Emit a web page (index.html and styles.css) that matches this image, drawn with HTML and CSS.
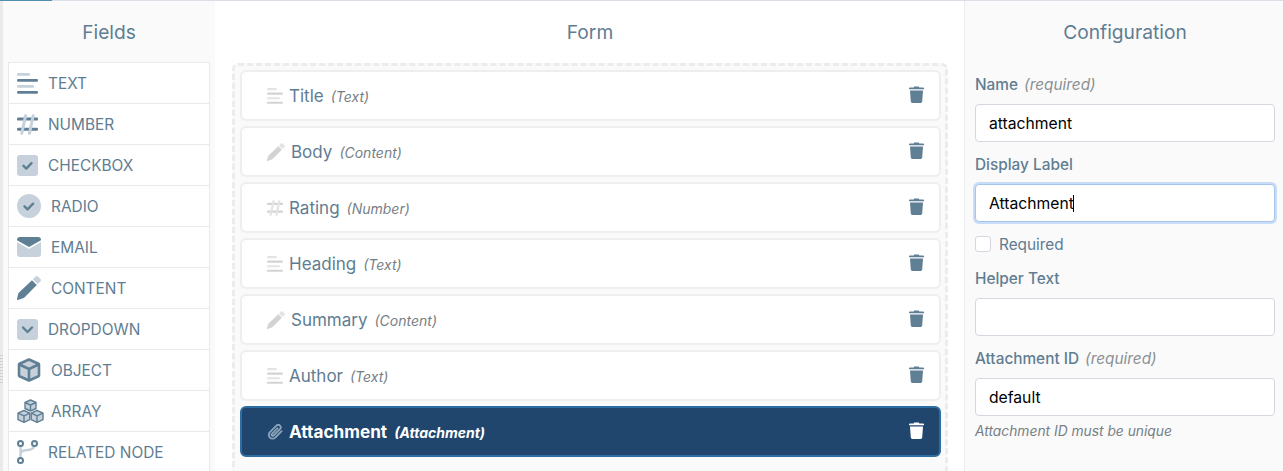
FILE: index.html
```html
<!DOCTYPE html>
<html lang="en">
<head>
<meta charset="utf-8">
<title>Form builder</title>
<link rel="stylesheet" href="styles.css">
</head>
<body>
<svg class="defs" width="0" height="0" aria-hidden="true">
  <defs>
    <symbol id="i-text" viewBox="0 0 21 21">
      <rect class="lt" x="0" y="0" width="13" height="2.8" rx="1.2"/>
      <rect class="dk" x="0" y="6" width="21" height="2.8" rx="1.2"/>
      <rect class="lt" x="0" y="12" width="17" height="2.8" rx="1.2"/>
      <rect class="dk" x="0" y="18" width="21" height="2.8" rx="1.2"/>
    </symbol>
    <symbol id="i-number" viewBox="0 0 21 21">
      <rect class="dk" x="0" y="3.600" width="21" height="3" rx="1.2"/>
      <rect class="dk" x="0" y="13.800" width="21" height="3" rx="1.2"/>
      <rect class="lt" x="5.200" y="0" width="3" height="21" rx="1.4" transform="rotate(12 6.700 10.500)"/>
      <rect class="lt" x="12.800" y="0" width="3" height="21" rx="1.4" transform="rotate(12 14.300 10.500)"/>
    </symbol>
    <symbol id="i-pencil" viewBox="0 0 24 24">
      <path class="lt" d="M18.600 0.600a1.700 1.700 0 0 1 2.300 0l2.500 2.500a1.700 1.700 0 0 1 0 2.300l-2.700 2.700-4.800-4.800z"/>
      <path class="dk" d="M15 4.200l4.800 4.800-12.400 12.400c-.5.500-1 .7-1.600.9L1 24a.8.8 0 0 1-1-1l1.100-4.800c.2-.6.400-1.100.9-1.600z"/>
    </symbol>
    <symbol id="i-trash" viewBox="0 0 15 17">
      <path class="tt" d="M5.200 0.600h4.600l.5 1H14a1 1 0 0 1 1 1v.7H0v-.7a1 1 0 0 1 1-1h3.700z"/>
      <path class="tb" d="M1 4.600h13l-.8 11a1.500 1.500 0 0 1-1.500 1.400H3.300a1.500 1.500 0 0 1-1.500-1.400z"/>
    </symbol>
  </defs>
</svg>
<div class="topline"><div class="topline-active"></div></div>
<div class="app">
  <div class="gutter"><div class="grip"></div></div>
  <aside class="fields">
    <h2 class="title">Fields</h2>
    <ul class="field-list">
      <li class="field-item"><svg class="ic ic-21"><use href="#i-text"/></svg><span>TEXT</span></li>
      <li class="field-item"><svg class="ic ic-21"><use href="#i-number"/></svg><span>NUMBER</span></li>
      <li class="field-item"><svg class="ic ic-21" viewBox="0 0 21 21"><rect class="lt" width="21" height="21" rx="3"/><path class="chk" d="M6.500 10.800l2.800 2.800 5.200-5.400"/></svg><span>CHECKBOX</span></li>
      <li class="field-item"><svg class="ic ic-24" viewBox="0 0 24 24"><circle class="lt" cx="12" cy="12" r="12"/><path class="chk" d="M7.500 12.300l3 3 5.600-5.600"/></svg><span>RADIO</span></li>
      <li class="field-item"><svg class="ic ic-24" viewBox="0 0 24 20"><path class="lt" d="M0 5l12 7 12-7v12a3 3 0 0 1-3 3H3a3 3 0 0 1-3-3z"/><path class="dk" d="M3 0h18a3 3 0 0 1 3 3v.2L12 10 0 3.200V3a3 3 0 0 1 3-3z"/></svg><span>EMAIL</span></li>
      <li class="field-item"><svg class="ic ic-24"><use href="#i-pencil"/></svg><span>CONTENT</span></li>
      <li class="field-item"><svg class="ic ic-21" viewBox="0 0 21 21"><rect class="lt" width="21" height="21" rx="3"/><path class="chk" d="M6 8.500l4.500 4.500 4.500-4.500"/></svg><span>DROPDOWN</span></li>
      <li class="field-item"><svg class="ic ic-24" viewBox="0 0 24 24"><path class="lt" d="M12 1L2 5.500v13L12 23l10-4.500v-13z"/><path class="box" d="M12 1.500l9.500 4.200a1 1 0 0 1 .5.800v11a1 1 0 0 1-.5.800L12 22.500l-9.500-4.200a1 1 0 0 1-.5-.8v-11a1 1 0 0 1 .5-.8z"/><path class="box" d="M2.500 6.500L12 11l9.500-4.500M12 11v11"/></svg><span>OBJECT</span></li>
      <li class="field-item"><svg class="ic ic-27" viewBox="0 0 27 24"><path class="lt box-thin" d="M13.500 1l5.500 2.500v6L13.500 12 8 9.500v-6z"/><path class="box-thin" d="M8 3.500l5.500 2.500L19 3.500M13.500 6v6"/><path class="lt box-thin" d="M7 11.500l5.800 2.700v6.500L7 23.300 1 20.700v-6.500z"/><path class="box-thin" d="M1 14.200l6 2.700 5.800-2.700M7 16.900v6.400"/><path class="lt box-thin" d="M20 11.500l6 2.700v6.500l-6 2.600-5.800-2.600v-6.500z"/><path class="box-thin" d="M14.200 14.200l5.800 2.700 6-2.700M20 16.900v6.400"/></svg><span>ARRAY</span></li>
      <li class="field-item"><svg class="ic ic-21b" viewBox="0 0 21 24"><path class="branch" d="M3.500 6v12M3.500 14.500c0-3.500 2-4 7-4.500 4-.4 6.500-1 6.500-4"/><circle class="node" cx="3.500" cy="3.500" r="2.500"/><circle class="node" cx="17.500" cy="3.500" r="2.500"/><circle class="node" cx="3.500" cy="20.500" r="2.500"/></svg><span>RELATED NODE</span></li>
    </ul>
  </aside>
  <main class="form">
    <h2 class="title">Form</h2>
    <div class="dropzone">
      <div class="card"><svg class="cic cic-text"><use href="#i-text"/></svg><span class="cname">Title</span><em class="ctype">(Text)</em><svg class="trash"><use href="#i-trash"/></svg></div>
      <div class="card"><svg class="cic cic-pencil"><use href="#i-pencil"/></svg><span class="cname">Body</span><em class="ctype">(Content)</em><svg class="trash"><use href="#i-trash"/></svg></div>
      <div class="card"><svg class="cic cic-text"><use href="#i-number"/></svg><span class="cname">Rating</span><em class="ctype">(Number)</em><svg class="trash"><use href="#i-trash"/></svg></div>
      <div class="card"><svg class="cic cic-text"><use href="#i-text"/></svg><span class="cname">Heading</span><em class="ctype">(Text)</em><svg class="trash"><use href="#i-trash"/></svg></div>
      <div class="card"><svg class="cic cic-pencil"><use href="#i-pencil"/></svg><span class="cname">Summary</span><em class="ctype">(Content)</em><svg class="trash"><use href="#i-trash"/></svg></div>
      <div class="card"><svg class="cic cic-text"><use href="#i-text"/></svg><span class="cname">Author</span><em class="ctype">(Text)</em><svg class="trash"><use href="#i-trash"/></svg></div>
      <div class="card card-active"><svg class="cic cic-text" viewBox="0 0 16 16"><path class="clip" d="M14.600 7.100l-6.300 6.500a3.800 3.800 0 0 1-5.400-5.400l6.500-6.600a2.500 2.500 0 0 1 3.600 3.500l-6.400 6.400a1.200 1.200 0 0 1-1.700-1.700l5.500-5.500"/></svg><span class="cname">Attachment</span><em class="ctype">(Attachment)</em><svg class="trash"><use href="#i-trash"/></svg></div>
    </div>
  </main>
  <aside class="config">
    <h2 class="title">Configuration</h2>
    <div class="cfg-field">
      <div class="label">Name <em class="req">(required)</em></div>
      <div class="input">attachment</div>
    </div>
    <div class="cfg-field">
      <div class="label">Display Label</div>
      <div class="input input-focus">Attachment<span class="caret"></span></div>
    </div>
    <div class="check-row"><span class="checkbox"></span><span>Required</span></div>
    <div class="cfg-field">
      <div class="label">Helper Text</div>
      <div class="input"></div>
    </div>
    <div class="cfg-field">
      <div class="label">Attachment ID <em class="req">(required)</em></div>
      <div class="input">default</div>
    </div>
    <p class="hint">Attachment ID must be unique</p>
  </aside>
</div>
</body>
</html>
```
FILE: styles.css
```css
* { box-sizing: border-box; }
html, body { margin: 0; height: 471px; overflow: hidden; }
body { font-family: Inter, "Liberation Sans", sans-serif; color: #5f7d92; background: #fff; }
.defs { position: absolute; }
.topline { height: 1px; background: #d9dfe5; }
.topline-active { width: 52px; height: 1px; background: #4f8fb0; }
.app { display: flex; height: 470px; }
.gutter { width: 3px; background: #eaeaea; flex: none; padding-top: 354px; }
.grip { height: 30px; background: repeating-linear-gradient(#cfcfcf 0 1px, #eaeaea 1px 3px); }
.title { margin: 0; font-size: 19.2px; font-weight: 400; line-height: 24px; text-align: center; color: #5f7d92; }

.fields { width: 212px; flex: none; background: #fafafa; padding: 19px 5px 0; }
.field-list { list-style: none; margin: 18px 0 0; padding: 0; background: #fff; border: 1px solid #e9e9e9; border-bottom: 0; }
.field-item { height: 41px; display: flex; align-items: center; gap: 10px; padding-left: 8px; font-size: 15.4px; border-bottom: 1px solid #e9e9e9; color: #5f7d92; }
.ic { flex: none; display: block; }
.ic-21 { width: 21px; height: 21px; }
.ic-24 { width: 24px; height: 24px; }
.ic-27 { width: 27px; height: 24px; margin-right: -3px; }
.ic-21b { width: 21px; height: 24px; }
.lt { fill: var(--light, #c6d1db); }
.dk { fill: var(--dark, #5f7f95); }
.chk { fill: none; stroke: #5f7f95; stroke-width: 2.400; stroke-linecap: round; stroke-linejoin: round; }
.box { fill: none; stroke: #5f7f95; stroke-width: 2.600; stroke-linejoin: round; }
.box-thin { stroke: #5f7f95; stroke-width: 1.400; stroke-linejoin: round; }
path.box-thin:not(.lt) { fill: none; }
.branch { fill: none; stroke: #c6d1db; stroke-width: 2.500; }
.node { fill: #fff; stroke: #5f7f95; stroke-width: 2; }

.form { flex: 1; min-width: 0; background: #fff; padding: 19px 16px 0 17px; }
.dropzone { margin-top: 19px; padding: 4px 4px 0 5px; height: 430px; border: 3px dashed #ececec; border-bottom: 0; border-radius: 6px 6px 0 0; background: #fafafa; display: flex; flex-direction: column; gap: 5px; }
.card { height: 51px; flex: none; display: flex; align-items: center; padding: 0 15px 0 25px; background: #fff; border: 2px solid #eeeeee; border-radius: 6px; color: #5f7d92; --light: #e4e4e4; --dark: #d3d3d3; --trash: #5f7f95; }
.cic { flex: none; display: block; margin-right: 6px; }
.cic-text { width: 16px; height: 16px; }
.cic-pencil { width: 18px; height: 18px; }
.cname { font-size: 17px; }
.ctype { margin: 2px auto 0 7px; font-size: 14px; color: #777f86; font-style: italic; }
.trash { width: 15px; height: 17px; flex: none; margin-top: -2px; }
.tt { fill: var(--trash, #5f7f95); }
.tb { fill: var(--trash, #5f7f95); }
.card-active { background: #20466e; border-color: #2b6ea3; color: #fff; --trash: #fff; }
.card-active .cname { font-size: 17.2px; font-weight: 700; color: #fff; }
.card-active .ctype { color: #fff; font-weight: 700; }
.clip { fill: none; stroke: #8aa4ba; stroke-width: 1.800; stroke-linecap: round; }

.config { width: 319px; flex: none; background: #fafafa; border-left: 1px solid #eeeeee; padding: 19px 8px 0 10px; }
.config .title { margin-bottom: 31px; }
.cfg-field { margin-bottom: 13px; }
.label { font-size: 15.36px; font-weight: 500; line-height: 20px; margin-bottom: 9px; color: #5f7d92; }
.req { font-weight: 400; color: #8b9094; margin-left: 2px; }
.input { height: 38px; background: #fff; border: 1px solid #d4d7de; border-radius: 4px; padding: 0 12px 0 13px; font-size: 15.7px; line-height: 38px; color: #000; }
.input-focus { border-color: #a9c4ea; box-shadow: 0 0 0 2px #c7dcf6; }
.caret { display: inline-block; width: 1px; height: 17px; background: #000; vertical-align: -3px; margin-left: -1px; }
.check-row { display: flex; align-items: center; gap: 8px; font-size: 15.36px; height: 20px; margin: -1px 0 15px; }
.checkbox { width: 16px; height: 16px; background: #fff; border: 1px solid #d4d7de; border-radius: 3px; }
.hint { margin: -7px 0 0; font-size: 13.8px; font-style: italic; color: #777f86; line-height: 18px; }
```
